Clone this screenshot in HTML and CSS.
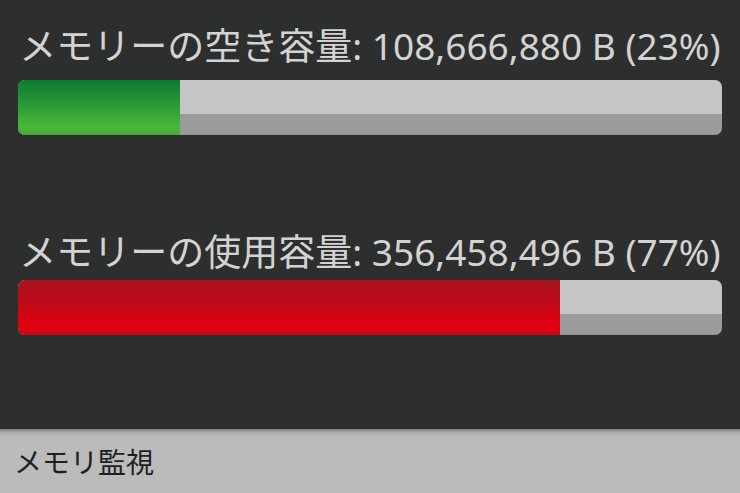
FILE: index.html
```html
<!DOCTYPE html>
<html lang="ja">
<head>
<meta charset="utf-8">
<title>メモリ監視</title>
<link rel="stylesheet" href="styles.css">
</head>
<body>
<div class="app">
  <main class="content">
    <section class="meter">
      <div class="label">メモリーの空き容量: 108,666,880 B (23%)</div>
      <div class="track"><div class="fill free" style="width:23%"></div></div>
    </section>
    <section class="meter">
      <div class="label">メモリーの使用容量: 356,458,496 B (77%)</div>
      <div class="track"><div class="fill used" style="width:77%"></div></div>
    </section>
  </main>
  <footer class="titlebar">メモリ監視</footer>
</div>
</body>
</html>
```
FILE: styles.css
```css
html, body {
  margin: 0;
  padding: 0;
}
body {
  width: 740px;
  height: 493px;
  overflow: hidden;
  background: #2d2f2e;
  font-family: "Noto Sans", "Noto Sans CJK JP", sans-serif;
}
.app {
  display: flex;
  flex-direction: column;
  height: 493px;
}
.content {
  flex: 1;
  display: flex;
  flex-direction: column;
  gap: 95px;
  padding: 24px 18px 0 18px;
}
.meter {
  display: flex;
  flex-direction: column;
  gap: 12px;
}
.meter + .meter {
  gap: 6px;
}
.label {
  color: #d3d3d3;
  font-size: 37px;
  line-height: 44px;
  text-align: center;
  white-space: nowrap;
}
.track {
  height: 55px;
  border-radius: 7px;
  overflow: hidden;
  background: linear-gradient(#c5c5c5 0, #c5c5c5 62%, #9b9b9b 62%, #9b9b9b 97%, #8c8c8c 100%);
  display: flex;
}
.fill {
  height: 100%;
}
.fill.free {
  background: linear-gradient(#0d7a31 0%, #2a9a36 45%, #4bb83a 85%, #45a935 100%);
}
.fill.used {
  background: linear-gradient(#a5141f 0%, #c20a18 45%, #e2000f 85%, #d2000e 100%);
}
.titlebar {
  height: 64px;
  box-sizing: border-box;
  padding: 0 14px;
  display: flex;
  align-items: center;
  background: linear-gradient(#7d7d7d 0, #a8a8a8 3px, #bbbbbb 7px, #bbbbbb 100%);
  color: #1f1f1f;
  font-size: 28px;
  font-family: "Noto Sans CJK JP", sans-serif;
}
```
